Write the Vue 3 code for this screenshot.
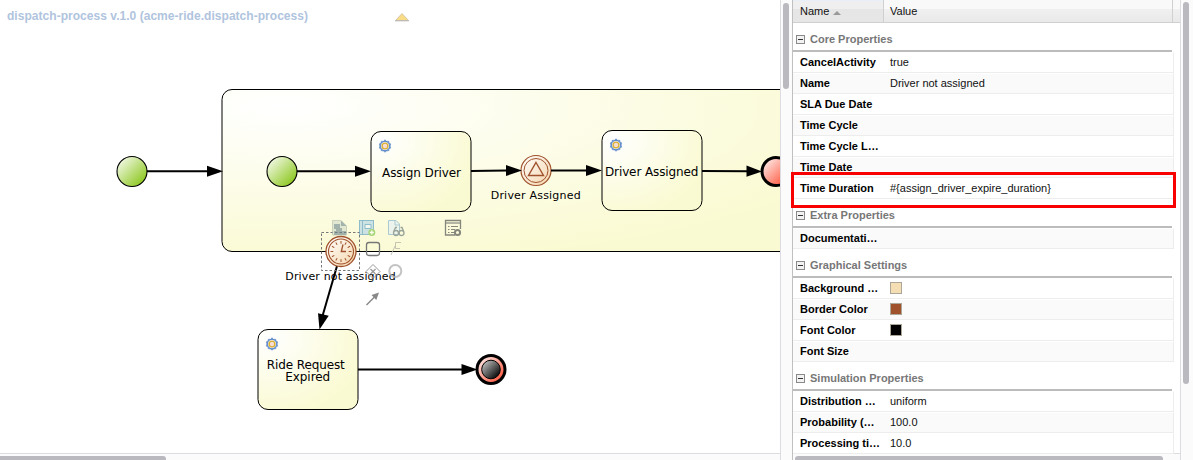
<script setup>
const sections = [
  {
    title: 'Core Properties',
    rows: [
      { name: 'CancelActivity', value: 'true' },
      { name: 'Name', value: 'Driver not assigned' },
      { name: 'SLA Due Date' },
      { name: 'Time Cycle' },
      { name: 'Time Cycle L…' },
      { name: 'Time Date' },
      { name: 'Time Duration', value: '#{assign_driver_expire_duration}', marked: true },
    ],
  },
  { title: 'Extra Properties', rows: [{ name: 'Documentati…', alt: true }] },
  {
    title: 'Graphical Settings',
    rows: [
      { name: 'Background …', color: '#f5deb3' },
      { name: 'Border Color', color: '#a0522d' },
      { name: 'Font Color', color: '#000000' },
      { name: 'Font Size' },
    ],
  },
  {
    title: 'Simulation Properties',
    rows: [
      { name: 'Distribution …', value: 'uniform' },
      { name: 'Probability (…', value: '100.0' },
      { name: 'Processing ti…', value: '10.0' },
    ],
  },
]

const tasks = [
  { x: 371, y: 131.5, lines: [{ text: 'Assign Driver', x: 421.5, y: 177, w: 79 }] },
  { x: 602, y: 130.5, lines: [{ text: 'Driver Assigned', x: 651.7, y: 176, w: 93.5 }] },
  {
    x: 258,
    y: 329.5,
    lines: [
      { text: 'Ride Request', x: 305.8, y: 369, w: 78 },
      { text: 'Expired', x: 307.7, y: 381, w: 45 },
    ],
  },
]

const flows = [
  { x1: 147, y1: 171.3, x2: 208, y2: 171.3, tip: 'M207 165.8 L223 171.3 L207 176.8Z' },
  { x1: 297, y1: 171.3, x2: 356, y2: 171.3, tip: 'M355 165.8 L371 171.3 L355 176.8Z' },
  { x1: 471, y1: 171, x2: 507, y2: 170.5, tip: 'M506 165 L522 170.5 L506 176Z' },
  { x1: 551, y1: 170.5, x2: 587, y2: 170.5, tip: 'M586 165 L602 170.5 L586 176Z' },
  { x1: 702, y1: 171, x2: 748, y2: 171.3, tip: 'M746.5 165.6 L762 171.5 L746.5 176.8Z' },
  { x1: 337, y1: 266, x2: 322.5, y2: 316, tip: 'M318 313.2 L328.7 315.8 L319.5 329.5Z' },
  { x1: 358, y1: 369.5, x2: 463, y2: 369.5, tip: 'M461.5 364 L477.5 369.5 L461.5 375Z' },
]

const ticks = Array.from({ length: 12 }, (_, i) => i * 30)
const teeth = Array.from({ length: 10 }, (_, i) => i * 36)
</script>

<template>
  <div class="editor">
    <main class="canvas-pane">
      <svg class="canvas" width="780" height="453" viewBox="0 0 780 453">
        <defs>
          <radialGradient id="fill" cx="10%" cy="10%" fx="10%" fy="10%" r="100%">
            <stop offset="0" stop-color="#fff" />
            <stop offset="1" stop-color="#fafad2" />
          </radialGradient>
          <linearGradient id="green" x1="0" y1="0" x2="1" y2="1">
            <stop offset="0" stop-color="#fff" />
            <stop offset="1" stop-color="#7dc000" />
          </linearGradient>
          <linearGradient id="red" x1="0" y1="0" x2="1" y2="1">
            <stop offset="0" stop-color="#fff" />
            <stop offset="1" stop-color="#ff3d20" />
          </linearGradient>
          <linearGradient id="sand" x1="0" y1="0" x2="1" y2="1">
            <stop offset="0" stop-color="#fff" />
            <stop offset="1" stop-color="#f5d5aa" />
          </linearGradient>
          <linearGradient id="dark" x1="0" y1="0" x2="1" y2="1">
            <stop offset="0" stop-color="#d8d8d8" />
            <stop offset="0.9" stop-color="#000" />
          </linearGradient>
        </defs>

        <text class="title" x="7" y="20" textLength="301">dispatch-process v.1.0 (acme-ride.dispatch-process)</text>
        <path d="M395.5 20.5 L402 13.5 L408.5 20.5Z" fill="#fbdc86" stroke="#c9bda0" stroke-width="0.8" />
        <path d="M395 20.8 H409" stroke="#b5b5b5" />

        <rect x="222" y="89.5" width="620" height="162" rx="10" fill="url(#fill)" stroke="#000" />

        <g v-for="t in tasks" :key="t.x">
          <rect :x="t.x" :y="t.y" width="100" height="80" rx="10" fill="url(#fill)" stroke="#000" />
          <g :transform="`translate(${t.x + 14} ${t.y + 14.5})`">
            <circle r="4.8" fill="#fff" stroke="#5e8acb" stroke-width="1.6" />
            <path
              v-for="a in teeth"
              :key="a"
              d="M0 -6.2 V-4.8"
              :transform="`rotate(${a})`"
              stroke="#7c9fd0"
              stroke-width="2"
            />
            <circle r="2.9" fill="#f8ddd2" stroke="#d9b032" stroke-width="1.4" />
          </g>
          <text
            v-for="l in t.lines"
            :key="l.text"
            class="task-label"
            :x="l.x"
            :y="l.y"
            :textLength="l.w"
          >{{ l.text }}</text>
        </g>

        <circle cx="132" cy="171.5" r="15" fill="url(#green)" stroke="#000" stroke-width="1.1" />
        <circle cx="282" cy="171.5" r="15" fill="url(#green)" stroke="#000" stroke-width="1.1" />
        <circle cx="776" cy="171.5" r="14" fill="url(#red)" stroke="#000" stroke-width="3" />

        <g fill="none" stroke="#a0522d">
          <circle cx="536" cy="170.5" r="15" fill="url(#sand)" stroke-width="1.2" />
          <circle cx="536" cy="170.5" r="12" />
          <path d="M536 162.5 L543.5 175.5 H528.5Z" stroke-width="1.4" />
        </g>
        <text class="event-label" x="535.7" y="199" textLength="90">Driver Assigned</text>

        <circle cx="491" cy="369.5" r="14" fill="url(#red)" stroke="#000" stroke-width="3" />
        <circle cx="491" cy="369.5" r="9.3" fill="url(#dark)" stroke="#000" />

        <g v-for="f in flows" :key="f.tip">
          <line :x1="f.x1" :y1="f.y1" :x2="f.x2" :y2="f.y2" stroke="#000" stroke-width="2" />
          <path :d="f.tip" />
        </g>

        <g fill="none" stroke="#a0522d">
          <circle cx="341" cy="251.5" r="15" fill="url(#sand)" stroke-width="1.3" />
          <circle cx="341" cy="251.5" r="12.5" stroke-width="1.1" />
          <path
            v-for="a in ticks"
            :key="a"
            d="M341 241 V243.8"
            :transform="`rotate(${a} 341 251.5)`"
          />
          <path d="M343 244.5 L341.3 251.5 H346" stroke-width="1.3" />
        </g>
        <rect x="321.5" y="232.5" width="38" height="38" fill="none" stroke="#777" stroke-dasharray="2.5 2" />
        <text class="event-label" x="340.5" y="280" textLength="110.5">Driver not assigned</text>

        <!-- context tools of the selected event -->
        <g opacity="0.6">
          <path d="M332.5 220.5 H341 L346.5 226 V235 H332.5Z" fill="#d2dbc9" stroke="#aab6a5" />
          <path d="M341 220.5 L346.5 226 H341Z M334 224 H340 V229 H334Z M336 228 H342 V231 H346 V235 H334V231 H336Z" fill="#68838c" />
        </g>
        <g opacity="0.65">
          <rect x="359.5" y="220.5" width="14" height="14" fill="#b4d6e6" stroke="#569bc0" />
          <path d="M362.5 221 V234 M365 224.5 H371 V228.5 H365Z" fill="#eef6fa" stroke="#569bc0" />
          <circle cx="371.8" cy="232.5" r="3.5" fill="#7cc246" />
          <path d="M369.8 232.5 H373.8 M371.8 230.5 V234.5" stroke="#fff" stroke-width="1.3" />
        </g>
        <g opacity="0.6" fill="none">
          <path d="M388.5 220.5 H396 L399.5 224 V234.5 H388.5Z" fill="#e3eff7" stroke="#78a9c8" />
          <path d="M395 220.5 V225 H399.5" stroke="#78a9c8" />
          <g stroke="#596b70" stroke-width="1.3">
            <circle cx="396" cy="233" r="2.5" />
            <circle cx="401.5" cy="233" r="2.5" />
            <path d="M394 231 L395.5 227.5 H397 M403.5 231 L402 227.5 H400.5" />
          </g>
        </g>
        <g fill="none" stroke="#85877d">
          <path d="M455 235 H445.5 V220.5 H460.5 V229" stroke-width="1.3" />
          <path d="M446 223 H460" stroke-width="1.2" />
          <path d="M448 226.5 H449.5 M451 226.5 H458 M448 229.5 H449.5 M451 229.5 H455 M448 232.5 H449.5 M451 232.5 H454" />
          <circle cx="457.5" cy="232.5" r="2.6" stroke-width="2" />
        </g>
        <rect x="366.5" y="242.5" width="13" height="13" rx="2.5" fill="none" stroke="#777" stroke-width="1.3" />
        <path d="M401 242.5 H395.5 V248.5 H400 M395 246 L391 255" fill="none" stroke="#b8b7aa" stroke-opacity="0.8" />
        <g fill="none" stroke="#999">
          <path d="M373 264.5 L380 271.5 L373 278.5 L366 271.5Z" />
          <path d="M370.5 269 L375.5 274 M375.5 269 L370.5 274" stroke-width="1.3" />
        </g>
        <circle cx="395.3" cy="271" r="6" fill="none" stroke="#b4b4b4" stroke-opacity="0.8" stroke-width="2" />
        <path d="M366.5 305 L375 296.5" stroke="#888" stroke-width="1.5" />
        <path d="M379 292.5 L371.5 295 L376.3 300Z" fill="#888" />
      </svg>
      <div class="track horizontal"><div class="thumb canvas-thumb"></div></div>
    </main>

    <div class="track vertical split"><div class="thumb split-thumb"></div></div>

    <aside class="properties">
      <div class="grid">
        <div class="head">
          <div class="head-name">Name <i class="sort"></i></div>
          <div class="head-value">Value</div>
        </div>
        <section v-for="s in sections" :key="s.title">
          <h2>
            <svg width="9" height="9" viewBox="0 0 9 9">
              <rect x="0.5" y="0.5" width="8" height="8" fill="#f2f2f2" stroke="#8a8a8a" />
              <path d="M2 4.5 H7" stroke="#333" />
            </svg>
            {{ s.title }}
          </h2>
          <div
            v-for="(r, i) in s.rows"
            :key="r.name"
            class="row"
            :class="{ alt: r.alt || i % 2 === 1 }"
          >
            <b>{{ r.name }}</b>
            <i v-if="r.color" class="swatch" :style="{ background: r.color }"></i>
            <span v-else>{{ r.value }}</span>
            <div v-if="r.marked" class="marker"></div>
          </div>
        </section>
      </div>
      <div class="track horizontal"><div class="thumb grid-thumb"></div></div>
    </aside>

    <div class="track vertical outer"><div class="thumb outer-thumb"></div></div>
  </div>
</template>

<style>
body {
  overflow: hidden;
}
</style>

<style scoped>
.editor {
  display: flex;
  width: 1193px;
  height: 460px;
  overflow: hidden;
  background: #fff;
  font: 11px 'Liberation Sans', Arial, sans-serif;
  color: #111;
}
.canvas-pane {
  width: 780px;
  display: flex;
  flex-direction: column;
}
.canvas {
  display: block;
  flex: none;
}
.title {
  font: bold 12px 'Liberation Sans', Arial, sans-serif;
  fill: #b0c4de;
}
.task-label {
  font: 12px 'DejaVu Sans', sans-serif;
  text-anchor: middle;
}
.event-label {
  font: 11px 'DejaVu Sans', sans-serif;
  text-anchor: middle;
}
.track {
  box-sizing: border-box;
  flex: none;
  background: #fbfbfc;
}
.horizontal {
  height: 7px;
  border-top: 1px solid #dcdce1;
  padding-top: 2px;
  overflow: hidden;
}
.vertical {
  border-left: 1px solid #dcdce1;
  padding: 2px 0 0 2px;
}
.thumb {
  border-radius: 3px;
  background: #b9b9bf;
}
.horizontal .thumb {
  height: 6px;
}
.vertical .thumb {
  width: 6px;
}
.canvas-thumb {
  width: 168px;
  margin-left: -2px;
}
.split {
  width: 12px;
}
.split-thumb {
  height: 86px;
  margin-top: 1px;
}
.properties {
  box-sizing: border-box;
  width: 388px;
  height: 460px;
  border-left: 1px solid #c0c0c0;
  display: flex;
  flex-direction: column;
}
.grid {
  height: 453px;
  overflow: visible;
}
.grid-thumb {
  width: 368px;
  margin-left: 2px;
}
.outer {
  width: 13px;
}
.outer-thumb {
  height: 382px;
}
.head {
  box-sizing: border-box;
  display: flex;
  height: 23px;
  border-bottom: 1px solid #d0d0d0;
  background: linear-gradient(#f9f9f9 0 9px, #f0f0f0 9px, #e9e9e9);
}
.head > div {
  box-sizing: border-box;
  height: 22px;
  line-height: 22px;
}
.head > .head-name {
  width: 91px;
  padding-left: 7px;
  border-right: 1px solid #d0d0d0;
  background: linear-gradient(#e9eff8 0 1px, #efefef 1px 9px, #e6e6e6 9px);
}
.head > .head-value {
  width: 289px;
  padding-left: 6px;
  border-right: 1px solid #d0d0d0;
}
.sort {
  display: inline-block;
  border: 4px solid transparent;
  border-top: 0;
  border-bottom: 4px solid #999;
  margin-left: 1px;
}
h2 {
  box-sizing: border-box;
  display: flex;
  align-items: center;
  gap: 5px;
  width: 379px;
  height: 29px;
  margin: 0;
  padding: 5px 0 0 3px;
  border-bottom: 2px solid #bcbcbc;
  font-size: 11px;
  font-weight: bold;
  color: #777;
}
.row {
  box-sizing: border-box;
  position: relative;
  display: flex;
  align-items: center;
  width: 381px;
  height: 21px;
  padding: 0 0 2px 7px;
  border-top: 1px solid #fff;
  border-right: 1px solid #ededed;
  border-bottom: 1px solid #ededed;
  white-space: nowrap;
}
.alt {
  background: #fafafa;
}
.row b {
  width: 90px;
  color: #000;
}
.swatch {
  box-sizing: border-box;
  width: 12px;
  height: 12px;
  border: 1px solid #aca899;
}
.marker {
  position: absolute;
  z-index: 1;
  box-sizing: border-box;
  left: -2px;
  top: -7px;
  width: 385px;
  height: 36px;
  border: 3px solid #f80000;
}
</style>
